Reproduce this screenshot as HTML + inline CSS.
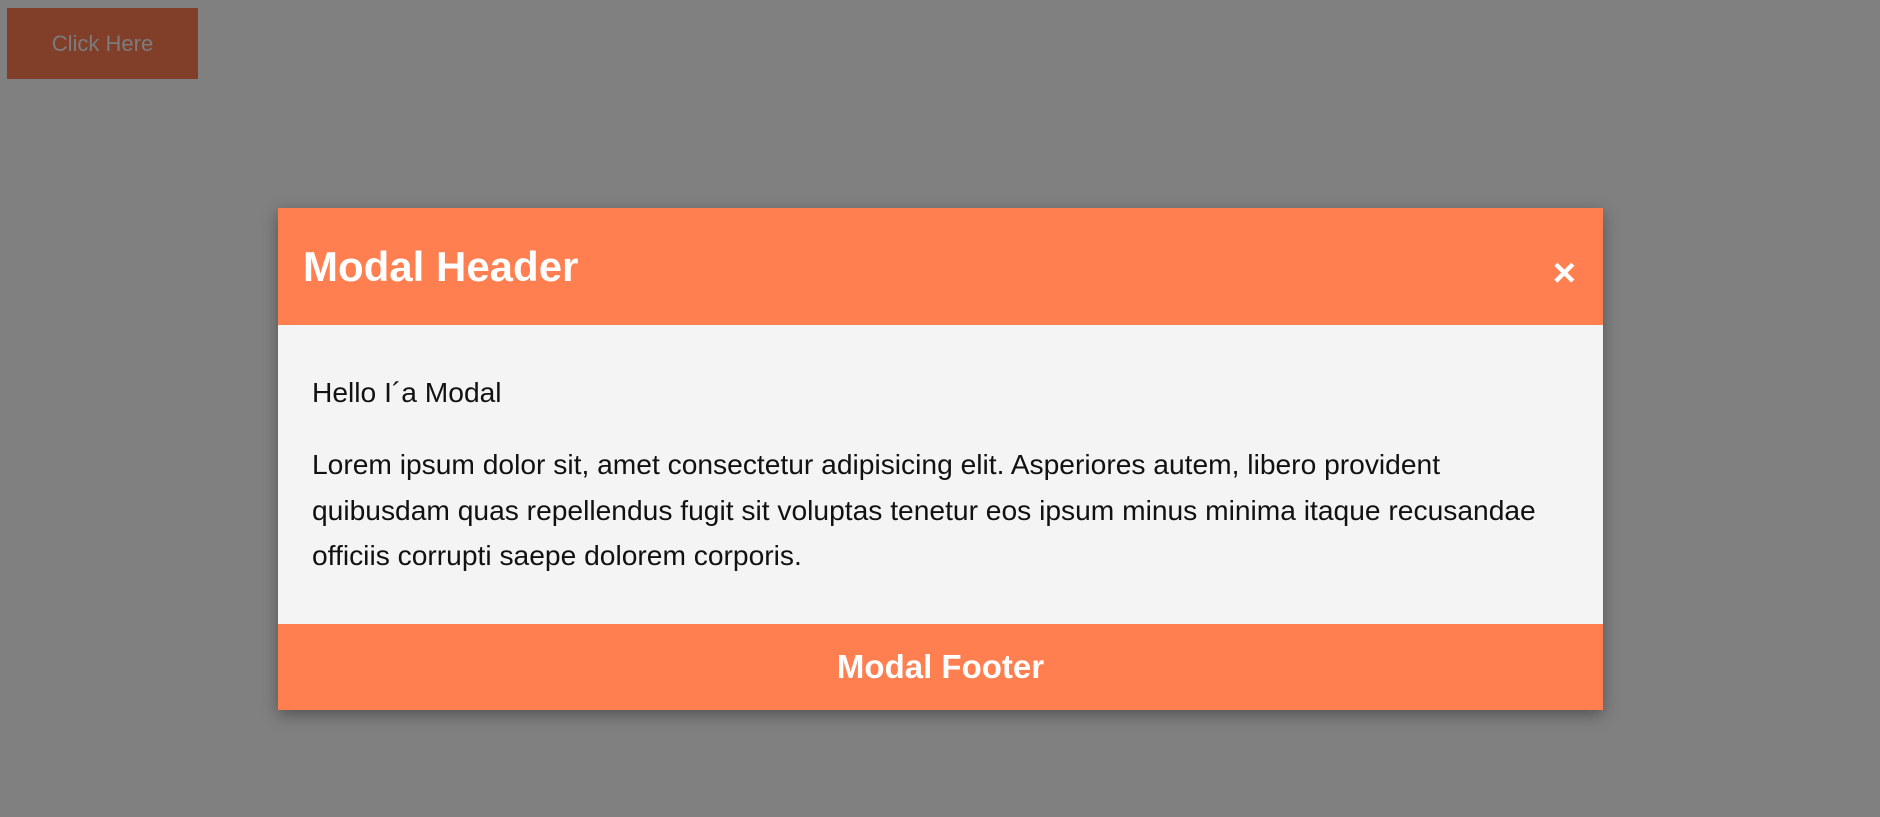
<!DOCTYPE html>
<html><head><style>
html,body{margin:0;padding:0;width:1880px;height:817px;overflow:hidden;background:#808080;font-family:"Liberation Sans",Arial,sans-serif;position:relative}
.btn{position:absolute;left:7px;top:8px;width:191px;height:71px;background:#813f29;color:#7c7c7c;font-size:22px;line-height:71px;text-align:center}
.modal{position:absolute;left:278px;top:208px;width:1325px;height:502px;background:#f4f4f4;box-shadow:0 5px 15px rgba(0,0,0,.35)}
.hd{height:117px;background:#ff7f50;position:relative;color:#fff}
.hd h2{margin:0;position:absolute;left:25px;top:36px;font-size:42px;font-weight:bold;line-height:45px}
.x{position:absolute;right:27px;top:45px;font-size:40px;font-weight:bold;line-height:40px}
.bd{height:299px;position:relative;font-size:28.2px;color:#111}
.bd p{margin:0;position:absolute;left:34px;width:1262px;line-height:45.5px}
.ft{height:86px;background:#ff7f50;color:#fff;text-align:center;font-size:33px;font-weight:bold;line-height:86px}
</style></head><body>
<div class="btn">Click Here</div>
<div class="modal">
<div class="hd"><h2>Modal Header</h2><span class="x">×</span></div>
<div class="bd">
<p style="top:45px">Hello I´a Modal</p>
<p style="top:117px">Lorem ipsum dolor sit, amet consectetur adipisicing elit. Asperiores autem, libero provident quibusdam quas repellendus fugit sit voluptas tenetur eos ipsum minus minima itaque recusandae officiis corrupti saepe dolorem corporis.</p>
</div>
<div class="ft">Modal Footer</div>
</div>
</body></html>
